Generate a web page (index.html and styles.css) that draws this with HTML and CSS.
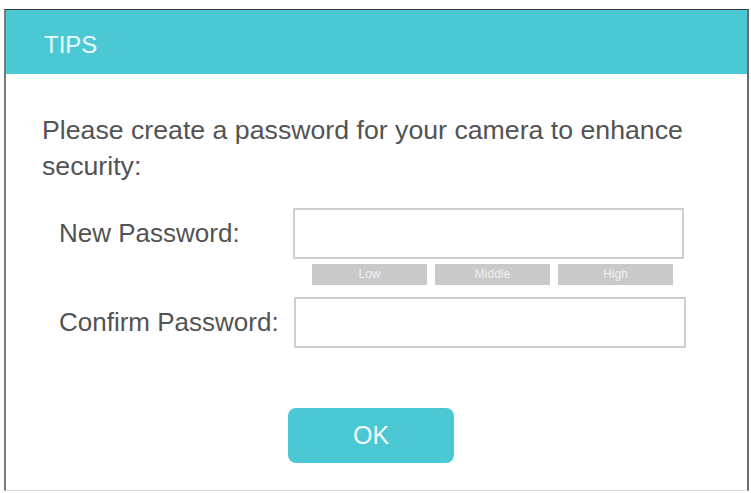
FILE: index.html
```html
<!DOCTYPE html>
<html lang="en">
<head>
<meta charset="utf-8">
<title>Tips</title>
<link rel="stylesheet" href="styles.css">
</head>
<body>
<div class="dialog">
  <div class="dialog-header">TIPS</div>
  <div class="dialog-body">
    <p class="intro">Please create a password for your camera to enhance security:</p>
    <div class="form">
      <label class="field-label" for="pwd">New Password:</label>
      <input class="field-input" id="pwd" type="password">
      <div class="strength">
        <span class="strength-bar">Low</span>
        <span class="strength-bar">Middle</span>
        <span class="strength-bar">High</span>
      </div>
      <label class="field-label confirm-label" for="pwd2">Confirm Password:</label>
      <input class="field-input confirm-input" id="pwd2" type="password">
    </div>
    <div class="actions">
      <button class="btn-ok" type="button">OK</button>
    </div>
  </div>
</div>
</body>
</html>
```
FILE: styles.css
```css
html, body {
  margin: 0;
  padding: 0;
  background: #ffffff;
}

body {
  font-family: "Liberation Sans", Arial, sans-serif;
  color: #535353;
}

.dialog {
  box-sizing: border-box;
  width: 745px;
  height: 482px;
  margin: 9px 0 0 4px;
  border-top: 1px solid #3a3a3a;
  border-left: 2px solid #7a7a7a;
  border-right: 2px solid #6a6a6a;
  border-bottom: 1px solid #dcdcdc;
  background: #ffffff;
  display: flex;
  flex-direction: column;
}

.dialog-header {
  height: 64px;
  background: #4cc8d4;
  color: #eafbfc;
  font-size: 24px;
  display: flex;
  align-items: center;
  padding: 6px 0 0 38px;
  box-sizing: border-box;
}

.dialog-body {
  padding: 38px 0 0 36px;
}

.intro {
  margin: 0;
  font-size: 26.7px;
  line-height: 36px;
  padding-right: 30px;
}

.form {
  display: grid;
  grid-template-columns: 234px 391px;
  margin: 24px 0 0 17px;
  align-items: center;
}

.field-label {
  font-size: 26px;
  line-height: 30px;
  padding-bottom: 2px;
}

.field-input {
  box-sizing: border-box;
  height: 51px;
  width: 391px;
  margin: 0;
  border: 2px solid #cfcfcf;
  background: #ffffff;
  outline: none;
}

.strength {
  grid-column: 2;
  display: flex;
  gap: 8px;
  margin: 5px 0 0 19px;
  height: 21px;
}

.strength-bar {
  width: 115px;
  height: 21px;
  background: #c9c9c9;
  color: #f0f0f0;
  font-size: 12px;
  line-height: 21px;
  text-align: center;
}

.confirm-label,
.confirm-input {
  margin-top: 12px;
}

.confirm-input {
  width: 392px;
  margin-left: 1px;
}

.actions {
  display: flex;
  justify-content: center;
  margin-top: 60px;
  padding-right: 36px;
}

.btn-ok {
  width: 166px;
  height: 55px;
  margin-right: 11px;
  border: none;
  border-radius: 8px;
  background: #4cc8d4;
  color: #f2fdfe;
  font-family: "Liberation Sans", Arial, sans-serif;
  font-size: 25px;
  padding: 0;
}
```
